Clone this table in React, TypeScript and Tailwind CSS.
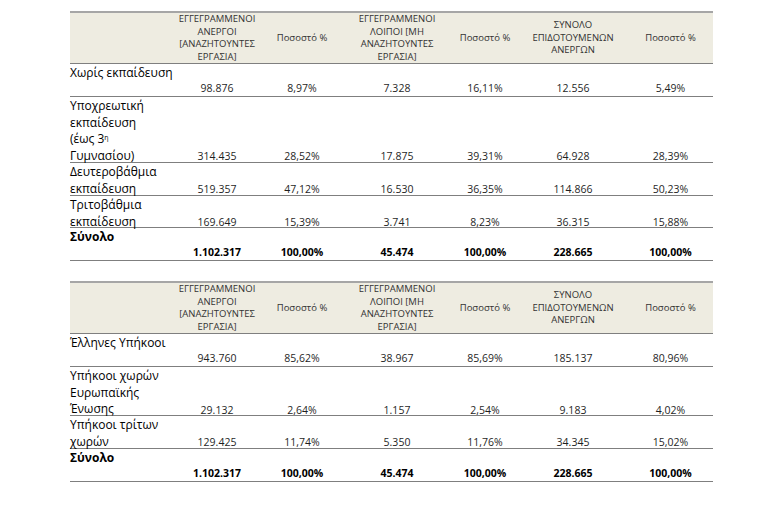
import React from 'react';

type Row = { label: React.ReactNode; values: string[]; h: string; bold?: boolean };

const headers: string[][] = [
  ['ΕΓΓΕΓΡΑΜΜΕΝΟΙ', 'ΑΝΕΡΓΟΙ', '[ΑΝΑΖΗΤΟΥΝΤΕΣ', 'ΕΡΓΑΣΙΑ]'],
  ['Ποσοστό %'],
  ['ΕΓΓΕΓΡΑΜΜΕΝΟΙ', 'ΛΟΙΠΟΙ [ΜΗ', 'ΑΝΑΖΗΤΟΥΝΤΕΣ', 'ΕΡΓΑΣΙΑ]'],
  ['Ποσοστό %'],
  ['ΣΥΝΟΛΟ', 'ΕΠΙΔΟΤΟΥΜΕΝΩΝ', 'ΑΝΕΡΓΩΝ'],
  ['Ποσοστό %'],
];

const education: Row[] = [
  { label: 'Χωρίς εκπαίδευση', values: ['98.876', '8,97%', '7.328', '16,11%', '12.556', '5,49%'], h: 'h-[33px]' },
  {
    label: (
      <>
        Υποχρεωτική<br />εκπαίδευση<br />(έως 3<sup className="text-[7px]">η</sup>
        <br />Γυμνασίου)
      </>
    ),
    values: ['314.435', '28,52%', '17.875', '39,31%', '64.928', '28,39%'],
    h: 'h-[66px]',
  },
  { label: <>Δευτεροβάθμια<br />εκπαίδευση</>, values: ['519.357', '47,12%', '16.530', '36,35%', '114.866', '50,23%'], h: 'h-[33px]' },
  { label: <>Τριτοβάθμια<br />εκπαίδευση</>, values: ['169.649', '15,39%', '3.741', '8,23%', '36.315', '15,88%'], h: 'h-[32px]' },
  { label: 'Σύνολο', values: ['1.102.317', '100,00%', '45.474', '100,00%', '228.665', '100,00%'], h: 'h-[33px]', bold: true },
];

const citizenship: Row[] = [
  { label: 'Έλληνες Υπήκοοι', values: ['943.760', '85,62%', '38.967', '85,69%', '185.137', '80,96%'], h: 'h-[33px]' },
  { label: <>Υπήκοοι χωρών<br />Ευρωπαϊκής<br />Ένωσης</>, values: ['29.132', '2,64%', '1.157', '2,54%', '9.183', '4,02%'], h: 'h-[49px]' },
  { label: <>Υπήκοοι τρίτων<br />χωρών</>, values: ['129.425', '11,74%', '5.350', '11,76%', '34.345', '15,02%'], h: 'h-[33px]' },
  { label: 'Σύνολο', values: ['1.102.317', '100,00%', '45.474', '100,00%', '228.665', '100,00%'], h: 'h-[33px]', bold: true },
];

const cols = 'grid grid-cols-[102px_90px_80px_110px_66px_110px_85px]';

function StatTable({ rows }: { rows: Row[] }) {
  return (
    <div className="w-[643px]">
      {/* header */}
      <div className={`${cols} h-[53px] bg-[#eeece1] border-t-2 border-b border-t-[#a6a6a6] border-b-[#7f7f7f]`}>
        <div />
        {headers.map((lines, i) => (
          <div key={i} className="flex flex-col items-center justify-center text-[9.5px] leading-[12.5px] text-[#333] whitespace-nowrap">
            {lines.map((l) => (
              <span key={l}>{l}</span>
            ))}
          </div>
        ))}
      </div>

      {/* body */}
      {rows.map((r, i) => (
        <div key={i} className={`${cols} ${r.h} border-b border-[#7f7f7f]`}>
          <div className={`pt-[1px] text-[12px] leading-[16.5px] text-black whitespace-nowrap ${r.bold ? 'font-bold' : ''}`}>
            {r.label}
          </div>
          {r.values.map((v, j) => (
            <div
              key={j}
              className={`flex items-end justify-center pb-[2px] text-[10.5px] leading-[12px] whitespace-nowrap ${r.bold ? 'font-bold text-black' : 'text-[#1f1f1f]'}`}
            >
              {v}
            </div>
          ))}
        </div>
      ))}
    </div>
  );
}

export default function App() {
  return (
    <div className="w-[779px] h-[525px] bg-white pt-[11px] pl-[70px] font-[family-name:'Open_Sans',sans-serif]">
      <StatTable rows={education} />
      <div className="h-[20px]" />
      <StatTable rows={citizenship} />
    </div>
  );
}
